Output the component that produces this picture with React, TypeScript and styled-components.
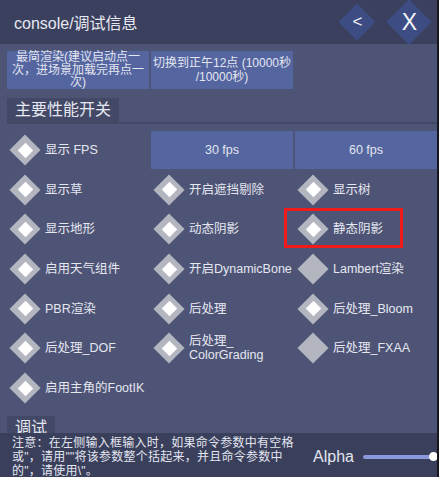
import React from "react";
import styled, { createGlobalStyle } from "styled-components";

const Global = createGlobalStyle`
  html, body { margin: 0; padding: 0; background: #17171d; }
  body { font-family: "Liberation Sans", "Noto Sans CJK SC", sans-serif; }
`;

const Shell = styled.div`
  width: 437px;
  height: 477px;
  display: flex;
  flex-direction: column;
  background: #4e5476;
  color: #e3e6f0;
  overflow: hidden;
`;

const Header = styled.header`
  height: 44px;
  flex: 0 0 44px;
  background: #3b405e;
  display: flex;
  align-items: center;
  padding: 0 5px 0 14px;
`;

const Title = styled.div`
  font-size: 16px;
  flex: 1;
  color: #e6e8f1;
`;

const DiamondButton = styled.button<{ $size: number; $font: number }>`
  width: ${(p) => p.$size * 1.414}px;
  height: ${(p) => p.$size * 1.414}px;
  border: 0;
  padding: 0;
  background: transparent;
  display: flex;
  align-items: center;
  justify-content: center;
  position: relative;
  cursor: pointer;
  margin-left: 11px;
  &::before {
    content: "";
    width: ${(p) => p.$size}px;
    height: ${(p) => p.$size}px;
    background: #3d4d83;
    transform: rotate(45deg);
    position: absolute;
  }
  span {
    position: relative;
    color: #f2f3f8;
    font-family: "Liberation Sans", sans-serif;
    font-size: ${(p) => p.$font}px;
  }
`;

const Scroll = styled.main`
  flex: 1;
  overflow: hidden;
  padding: 7px 0 0 7px;
`;

const Grid = styled.div<{ $rowGap: number }>`
  display: grid;
  grid-template-columns: repeat(3, 1fr);
  column-gap: 2px;
  row-gap: ${(p) => p.$rowGap}px;
`;

const ActionButton = styled.button<{ $lh: number }>`
  height: 38px;
  border: 0;
  background: #5465a0;
  color: #e3e6f0;
  font-family: "Liberation Sans", "Noto Sans CJK SC", sans-serif;
  font-size: 12px;
  line-height: ${(p) => p.$lh}px;
  padding: 0 1px;
  text-align: center;
  display: flex;
  align-items: center;
  justify-content: center;
  white-space: nowrap;
`;

const FpsButton = styled(ActionButton)`
  font-size: 12.5px;
`;

const Section = styled.div`
  margin-top: 9px;
  margin-bottom: 7px;
  border-bottom: 2px solid #434865;
  display: flex;
`;

const SectionLabel = styled.div`
  height: 24px;
  line-height: 24px;
  padding: 0 8px;
  background: #434866;
  font-size: 16px;
  color: #e6e8f1;
`;

const Cell = styled.div`
  height: 38px;
  display: flex;
  align-items: center;
  position: relative;
  padding-left: 2px;
`;

const Check = styled.div<{ $on: boolean }>`
  width: 32px;
  height: 32px;
  flex: 0 0 32px;
  display: flex;
  align-items: center;
  justify-content: center;
  position: relative;
  &::before {
    content: "";
    position: absolute;
    width: 22px;
    height: 22px;
    background: #b3b5bf;
    transform: rotate(45deg);
  }
  &::after {
    content: "";
    position: absolute;
    width: 11px;
    height: 11px;
    background: #ffffff;
    transform: rotate(45deg);
    display: ${(p) => (p.$on ? "block" : "none")};
  }
`;

const Label = styled.span`
  margin-left: 4px;
  font-size: 12.5px;
  line-height: 14px;
  white-space: nowrap;
  color: #e5e7f0;
`;

const Highlight = styled.div`
  position: absolute;
  left: -11px;
  top: -2px;
  width: 119px;
  height: 40px;
  box-sizing: border-box;
  border: 3px solid #f01b1b;
  pointer-events: none;
`;

const Footer = styled.footer`
  height: 44px;
  flex: 0 0 44px;
  background: #3a3f5c;
  display: flex;
  padding-left: 12px;
`;

const Notice = styled.div`
  flex: 0 0 292px;
  padding-top: 3px;
  font-size: 12px;
  line-height: 14px;
  letter-spacing: 0.25px;
  color: #e3e6f0;
  white-space: nowrap;
  div { height: 14px; }
`;

const AlphaGroup = styled.div`
  display: flex;
  align-items: center;
  margin-top: 3px;
`;

const AlphaLabel = styled.span`
  margin-left: 9px;
  font-size: 16px;
  color: #e3e6f0;
`;

const Slider = styled.div`
  position: relative;
  margin-left: 9px;
  width: 71px;
  height: 4px;
  border-radius: 2px;
  background: #8a99de;
`;

const Thumb = styled.div`
  position: absolute;
  right: -4px;
  top: 50%;
  width: 9px;
  height: 9px;
  margin-top: -4.5px;
  border-radius: 50%;
  background: #ffffff;
`;

type Item = { label: React.ReactNode; on: boolean; highlight?: boolean };

const items: Item[] = [
  { label: "显示草", on: true },
  { label: "开启遮挡剔除", on: true },
  { label: "显示树", on: true },
  { label: "显示地形", on: true },
  { label: "动态阴影", on: true },
  { label: "静态阴影", on: true, highlight: true },
  { label: "启用天气组件", on: true },
  { label: "开启DynamicBone", on: true },
  { label: "Lambert渲染", on: false },
  { label: "PBR渲染", on: true },
  { label: "后处理", on: true },
  { label: "后处理_Bloom", on: true },
  { label: "后处理_DOF", on: true },
  {
    label: (
      <>
        后处理_
        <br />
        ColorGrading
      </>
    ),
    on: true,
  },
  { label: "后处理_FXAA", on: false },
  { label: "启用主角的FootIK", on: true },
];

const CheckCell = ({ item }: { item: Item }) => (
  <Cell>
    {item.highlight && <Highlight />}
    <Check $on={item.on} />
    <Label>{item.label}</Label>
  </Cell>
);

export default function App() {
  return (
    <>
      <Global />
      <Shell>
        <Header>
          <Title>console/调试信息</Title>
          <DiamondButton $size={26} $font={17}>
            <span>&lt;</span>
          </DiamondButton>
          <DiamondButton $size={32} $font={23}>
            <span>X</span>
          </DiamondButton>
        </Header>
        <Scroll>
          <Grid $rowGap={0}>
            <ActionButton $lh={12.5}>
              最简渲染(建议启动点一
              <br />
              次，进场景加载完再点一
              <br />
              次)
            </ActionButton>
            <ActionButton $lh={14}>
              切换到正午12点 (10000秒
              <br />
              /10000秒)
            </ActionButton>
          </Grid>
          <Section>
            <SectionLabel>主要性能开关</SectionLabel>
          </Section>
          <Grid $rowGap={1.7}>
            <CheckCell item={{ label: "显示 FPS", on: true }} />
            <FpsButton $lh={14}>30 fps</FpsButton>
            <FpsButton $lh={14}>60 fps</FpsButton>
            {items.map((it, i) => (
              <CheckCell key={i} item={it} />
            ))}
          </Grid>
          <Section>
            <SectionLabel>调试</SectionLabel>
          </Section>
        </Scroll>
        <Footer>
          <Notice>
            <div>注意：在左侧输入框输入时，如果命令参数中有空格</div>
            <div>{'或"，请用""将该参数整个括起来，并且命令参数中'}</div>
            <div>{'的"，请使用\\"。'}</div>
          </Notice>
          <AlphaGroup>
            <AlphaLabel>Alpha</AlphaLabel>
            <Slider>
              <Thumb />
            </Slider>
          </AlphaGroup>
        </Footer>
      </Shell>
    </>
  );
}
